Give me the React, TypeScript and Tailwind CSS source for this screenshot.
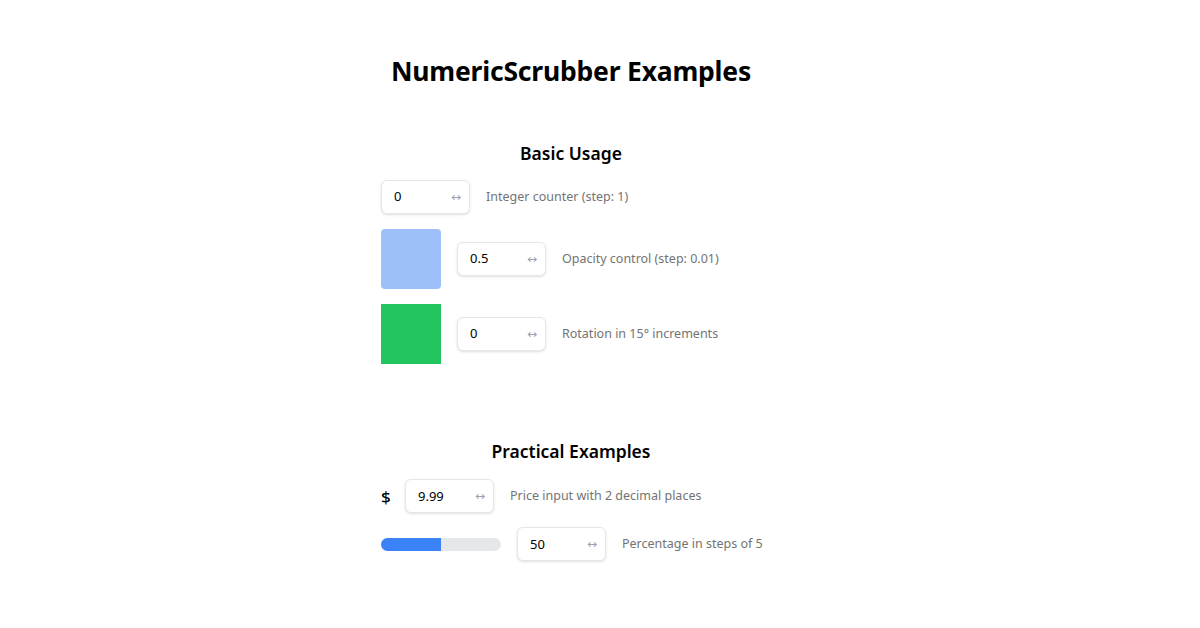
import { useState } from "react";

const Scrubber = ({ value }: { value: string }) => {
  return (
    <div className="flex items-center justify-between w-[89px] h-[34px] pl-3 pr-2 bg-white border border-gray-200 rounded-md shadow-sm shrink-0">
      <span className="text-[13px] text-black">{value}</span>
      <span className="text-[12px] text-gray-400" style={{ fontFamily: '"DejaVu Sans", sans-serif' }}>
        ↔
      </span>
    </div>
  );
};

const Label = ({ children }: { children: string }) => (
  <span className="text-[12.5px] text-neutral-500 whitespace-nowrap">{children}</span>
);

export default function App() {
  const [percent] = useState(50);

  return (
    <div className="min-h-screen bg-white" style={{ fontFamily: '"Noto Sans", "Open Sans", sans-serif' }}>
      <div className="w-[380px] ml-[381px] pt-[52px]">
        <h1 className="text-center text-[26.5px] font-bold text-black tracking-[-0.2px]">
          NumericScrubber Examples
        </h1>

        <section className="mt-[48px]">
          <h2 className="text-center text-[17.5px] font-semibold text-black mb-[14px]">Basic Usage</h2>
          <div className="flex flex-col gap-[15px]">
            <div className="flex items-center gap-4">
              <Scrubber value="0" />
              <Label>Integer counter (step: 1)</Label>
            </div>
            <div className="flex items-center gap-4">
              <div className="w-[60px] h-[60px] rounded bg-[#3b82f6] opacity-50 shrink-0" />
              <Scrubber value="0.5" />
              <Label>Opacity control (step: 0.01)</Label>
            </div>
            <div className="flex items-center gap-4">
              <div className="w-[60px] h-[60px] bg-[#22c55e] shrink-0" />
              <Scrubber value="0" />
              <Label>Rotation in 15° increments</Label>
            </div>
          </div>
        </section>

        <section className="mt-[74px]">
          <h2 className="text-center text-[17.5px] font-semibold text-black mb-[15px]">Practical Examples</h2>
          <div className="flex flex-col gap-[14px]">
            <div className="flex items-center gap-4">
              <span className="text-[17px] font-medium text-black w-[8px]">$</span>
              <Scrubber value="9.99" />
              <Label>Price input with 2 decimal places</Label>
            </div>
            <div className="flex items-center gap-4">
              <div className="w-[120px] h-[13px] bg-gray-200 rounded-full overflow-hidden shrink-0">
                <div className="h-full bg-[#3b82f6]" style={{ width: `${percent}%` }} />
              </div>
              <Scrubber value="50" />
              <Label>Percentage in steps of 5</Label>
            </div>
          </div>
        </section>
      </div>
    </div>
  );
}
